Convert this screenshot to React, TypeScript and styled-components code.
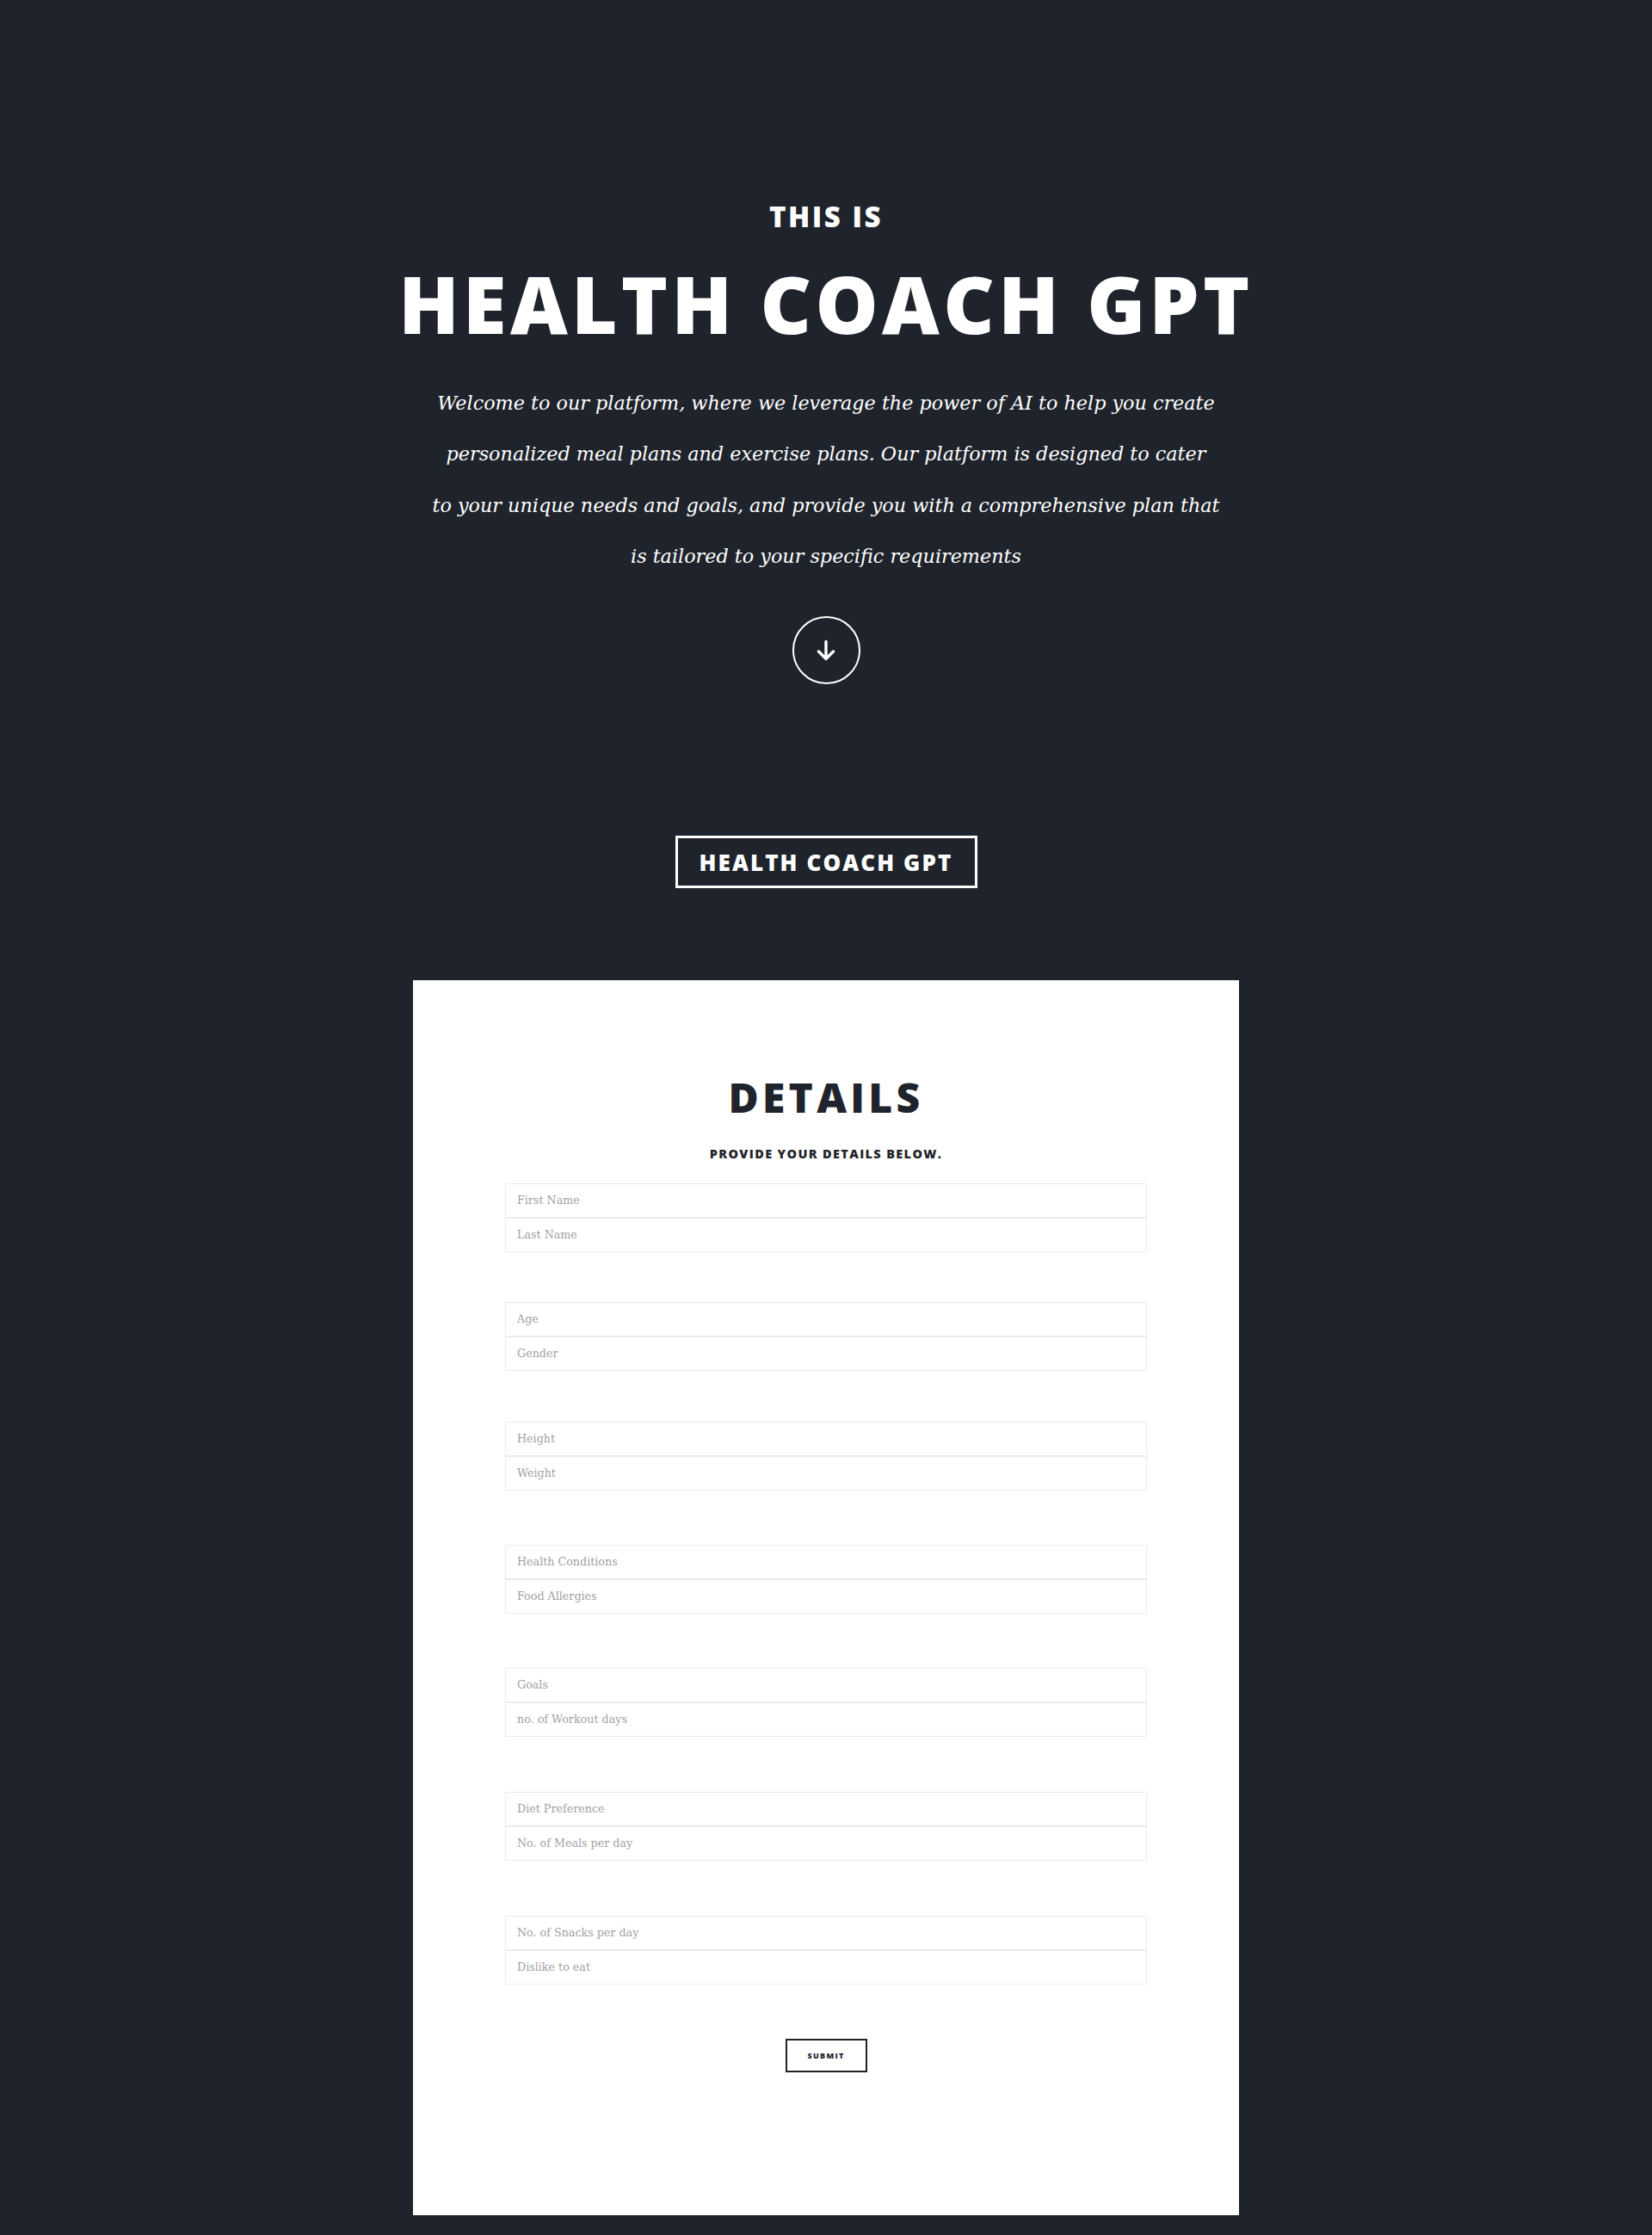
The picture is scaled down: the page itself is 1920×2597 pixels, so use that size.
import React from "react";
import styled, { createGlobalStyle } from "styled-components";

const Global = createGlobalStyle`
  html, body { margin: 0; padding: 0; background: #1f242c; }
  body { font-family: "DejaVu Serif", serif; }
  * { box-sizing: border-box; }
`;

const Page = styled.div`
  background: #1f242c;
  padding-bottom: 23px;
  display: flex;
  flex-direction: column;
  align-items: center;
`;

const Hero = styled.header`
  display: flex;
  flex-direction: column;
  align-items: center;
  text-align: center;
  padding-top: 235px;
`;

const Eyebrow = styled.h2`
  margin: 0;
  font-family: "Open Sans", sans-serif;
  font-weight: 800;
  font-size: 33px;
  line-height: 1;
  letter-spacing: 2.5px;
  color: #fff;
  text-transform: uppercase;
`;

const Title = styled.h1`
  margin: 39px 0 0;
  font-family: "Open Sans", sans-serif;
  font-weight: 800;
  font-size: 92px;
  line-height: 1;
  letter-spacing: 4.3px;
  color: #fff;
  text-transform: uppercase;
`;

const Intro = styled.p`
  margin: 40px 0 0;
  font-family: "DejaVu Serif", serif;
  font-style: italic;
  font-weight: 400;
  font-size: 22.3px;
  line-height: 59.3px;
  color: #fff;
  white-space: nowrap;
`;

const CircleButton = styled.a`
  margin-top: 40px;
  width: 79px;
  height: 79px;
  border: 2px solid #fff;
  border-radius: 50%;
  display: flex;
  align-items: center;
  justify-content: center;
`;

const BoxTitle = styled.h2`
  margin: 176px 0 0;
  width: 351px;
  height: 61px;
  border: 3px solid #fff;
  display: flex;
  align-items: center;
  justify-content: center;
  font-family: "Open Sans", sans-serif;
  font-weight: 800;
  font-size: 26px;
  line-height: 1;
  letter-spacing: 2.1px;
  color: #fff;
  text-transform: uppercase;
`;

const Panel = styled.section`
  margin-top: 107px;
  width: 960px;
  background: #fff;
  padding: 112px 107px 166px;
  display: flex;
  flex-direction: column;
  align-items: center;
`;

const PanelTitle = styled.h2`
  margin: 0;
  font-family: "Open Sans", sans-serif;
  font-weight: 800;
  font-size: 48px;
  line-height: 1;
  letter-spacing: 4.3px;
  color: #1f242c;
  text-transform: uppercase;
`;

const PanelSub = styled.p`
  margin: 35px 0 0;
  font-family: "Open Sans", sans-serif;
  font-weight: 800;
  font-size: 14.5px;
  line-height: 1;
  letter-spacing: 1.35px;
  color: #1f242c;
  text-transform: uppercase;
`;

const Form = styled.form`
  margin-top: 26px;
  width: 100%;
  display: flex;
  flex-direction: column;
  align-items: center;
`;

const FieldGroup = styled.div<{ $gap: number }>`
  width: 100%;
  margin-top: ${(p) => p.$gap}px;
  display: flex;
  flex-direction: column;
`;

const Input = styled.input`
  width: 100%;
  height: 40px;
  border: 1px solid #ebebeb;
  background: #fff;
  padding: 0 13px;
  font-family: "DejaVu Serif", serif;
  font-size: 12.7px;
  color: #333;
  outline: none;
  &::placeholder {
    color: #9f9f9f;
  }
`;

const Submit = styled.button`
  margin-top: 63px;
  width: 95px;
  height: 39px;
  border: 2px solid #222;
  background: #fff;
  font-family: "Open Sans", sans-serif;
  font-weight: 800;
  font-size: 9px;
  letter-spacing: 1.3px;
  color: #1f242c;
  text-transform: uppercase;
  display: flex;
  align-items: center;
  justify-content: center;
  padding: 0;
`;

const groups: { gap: number; fields: string[] }[] = [
  { gap: 0, fields: ["First Name", "Last Name"] },
  { gap: 58, fields: ["Age", "Gender"] },
  { gap: 59, fields: ["Height", "Weight"] },
  { gap: 63, fields: ["Health Conditions", "Food Allergies"] },
  { gap: 63, fields: ["Goals", "no. of Workout days"] },
  { gap: 64, fields: ["Diet Preference", "No. of Meals per day"] },
  { gap: 64, fields: ["No. of Snacks per day", "Dislike to eat"] },
];

const ArrowDown = () => (
  <svg width="24" height="26" viewBox="0 0 24 26" fill="none">
    <path
      d="M12 2.5V22.5M3.5 14L12 22.5L20.5 14"
      stroke="#fff"
      strokeWidth="3.4"
      strokeLinecap="round"
      strokeLinejoin="round"
    />
  </svg>
);

export default function App() {
  return (
    <>
      <Global />
      <Page>
        <Hero>
          <Eyebrow>This is</Eyebrow>
          <Title>Health Coach GPT</Title>
          <Intro>
            Welcome to our platform, where we leverage the power of AI to help you create
            <br />
            personalized meal plans and exercise plans. Our platform is designed to cater
            <br />
            to your unique needs and goals, and provide you with a comprehensive plan that
            <br />
            is tailored to your specific requirements
          </Intro>
          <CircleButton href="#details" aria-label="Scroll down">
            <ArrowDown />
          </CircleButton>
        </Hero>
        <BoxTitle>Health Coach GPT</BoxTitle>
        <Panel id="details">
          <PanelTitle>Details</PanelTitle>
          <PanelSub>Provide your details below.</PanelSub>
          <Form onSubmit={(e) => e.preventDefault()}>
            {groups.map((g, i) => (
              <FieldGroup key={i} $gap={g.gap}>
                {g.fields.map((f) => (
                  <Input key={f} type="text" placeholder={f} />
                ))}
              </FieldGroup>
            ))}
            <Submit type="submit">Submit</Submit>
          </Form>
        </Panel>
      </Page>
    </>
  );
}
